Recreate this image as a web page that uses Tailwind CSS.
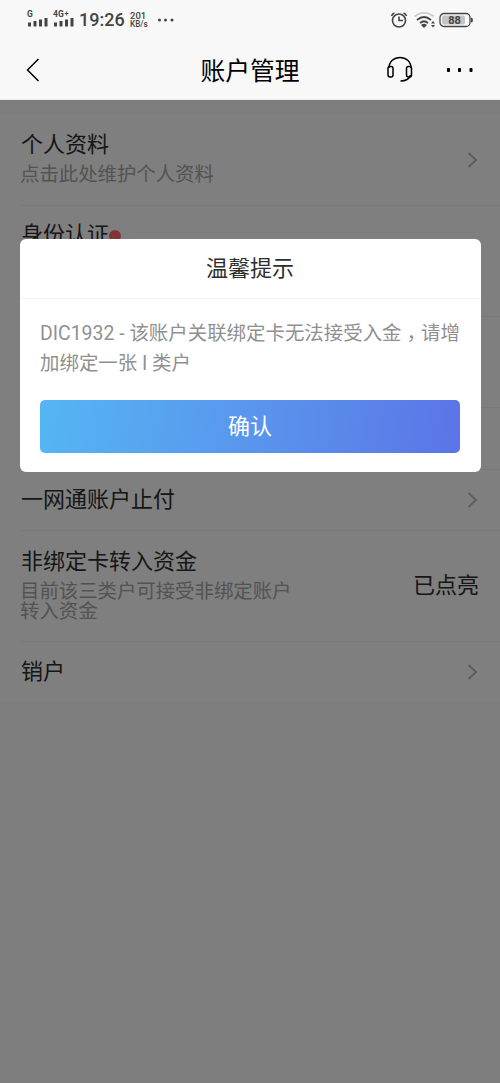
<!DOCTYPE html>
<html lang="zh-CN">
<head>
<meta charset="utf-8">
<title>账户管理</title>
<script src="https://cdn.jsdelivr.net/npm/@tailwindcss/browser@4"></script>
</head>
<body class="relative h-[1083px] w-[500px] overflow-hidden bg-[#fafafa] font-[Roboto,'Noto_Sans_CJK_SC',sans-serif] text-[#2e2e2e]">
<header class="flex h-[100px] flex-col border-b border-[#ececec] bg-[#f8f8f8]">
  <div class="flex h-10 items-center pl-[27px] pr-[26px] text-[#444]">
    <svg class="h-[22px] w-[48px] shrink-0" viewBox="0 0 48 22" fill="#444">
      <text x="0" y="7.500" font-size="8.500" font-weight="700" font-family="Roboto">G</text>
      <text x="26" y="7.500" font-size="8.500" font-weight="700" font-family="Roboto">4G</text>
      <text x="37.500" y="7" font-size="7.500" font-weight="700" font-family="Roboto">+</text>
      <path d="M1 13.500h3v4h-3zM6.500 12h3v5.500h-3zM12 10.500h3v7h-3zM17.500 9h3v8.500h-3zM27 13.500h3v4h-3zM32.500 12h3v5.500h-3zM38 10.500h3v7h-3zM43.500 9h3v8.500h-3z"/>
    </svg>
    <span class="ml-[4px] w-[47px] whitespace-nowrap text-[18px] font-medium leading-none">19:26</span>
    <div class="ml-[4px] w-[20px] font-medium leading-[9px]"><div class="text-[9.500px]">201</div><div class="text-[8.200px]">KB/s</div></div>
    <svg class="ml-[7px] h-4 w-[18px]" viewBox="0 0 18 16" fill="#444"><circle cx="2.500" cy="8" r="1.500"/><circle cx="8.500" cy="8" r="1.500"/><circle cx="15" cy="8" r="1.500"/></svg>
    <svg class="ml-auto h-[18px] w-[18px]" viewBox="0 0 18 18" fill="none" stroke="#444" stroke-width="1.600"><circle cx="9" cy="9.500" r="6.500"/><path d="M9 5.500V9.500h4M1.500 5C2 3.500 3 2.500 4.500 2M16.500 5c-.500-1.500-1.500-2.500-3-3"/></svg>
    <svg class="ml-[6px] h-[18px] w-[22px]" viewBox="0 0 22 18" fill="none" stroke-width="1.700"><path stroke="#ccc" d="M.5 5.500Q10 -2 20 5.500"/><path stroke="#444" d="M3 9Q10 3 17 9M6 12Q10 8.500 14 12"/><path fill="#444" d="M7 14q3-2.500 6 0l-3 3zM17 12.500l2-2.500 2 2.500zM17 14l2 2.500 2-2.500z"/></svg>
    <svg class="ml-[3px] h-[16px] w-[35px]" viewBox="0 0 35 16"><rect x="1" y="1.500" width="30" height="13" rx="4" fill="#f8f8f8" stroke="#444" stroke-width="1.300"/><rect x="3" y="3.500" width="23" height="9" rx="2" fill="#c4c4c4"/><path d="M32 5.500q2 0 2 2.500t-2 2.500z" fill="#444"/><text x="15.500" y="12" text-anchor="middle" font-size="11" font-weight="700" font-family="Roboto" fill="#444">88</text></svg>
  </div>
  <div class="grid h-[60px] grid-cols-[150px_200px_150px] items-center pt-[2px] text-black">
    <svg class="ml-[26px] h-[24px] w-[14px]" viewBox="0 0 14 24" fill="none" stroke="currentColor" stroke-width="1.500"><path d="M12.500 1L1.500 12l11 11"/></svg>
    <h1 class="pt-[4px] text-center text-[24.800px] font-normal leading-[36px]">账户管理</h1>
    <div class="flex items-center pl-[36px]">
      <svg class="h-[28px] w-[28px]" viewBox="0 0 28 28" fill="none" stroke="currentColor" stroke-width="1.500"><path d="M3 12C3 5.500 8 1.500 14 1.500S25 5.500 25 12M24.500 19c-1 4-4 6-10 6"/><rect x="2" y="10.500" width="5" height="10.500" rx="2"/><rect x="20.500" y="10.500" width="5" height="10.500" rx="2"/></svg>
      <svg class="ml-[32px] h-[6px] w-[28px]" viewBox="0 0 28 6" fill="currentColor"><rect x="1" y="1" width="3" height="4" rx=".8"/><rect x="12" y="1" width="3" height="4" rx=".8"/><rect x="23.500" y="1" width="3" height="4" rx=".8"/></svg>
    </div>
  </div>
</header>

<main class="pt-[13px]">
  <section class="bg-white pl-[21px] text-[22px] leading-[30px]">
    <div class="flex h-[93px] items-center justify-between border-b border-[#f3f3f3] pr-[22px] pt-[2px]">
      <div><div>个人资料</div><div class="-ml-px text-[19.400px] text-[#a6a6a6]">点击此处维护个人资料</div></div>
      <svg class="h-4 w-[11px]" viewBox="0 0 11 16" fill="none" stroke="#b8b8b8" stroke-width="1.800"><path d="M1.500 1L9 8l-7.500 7"/></svg>
    </div>
    <div class="flex h-[111px] items-start border-b border-[#f3f3f3] pt-[14px]"><span>身份认证</span><i class="mt-[10px] h-3 w-3 rounded-full bg-[#ff6b6b]"></i></div>
    <div class="h-[91px] border-b border-[#f3f3f3]"></div>
    <div class="h-[62px] border-b border-[#f3f3f3]"></div>
    <div class="flex h-[61px] items-center justify-between border-b border-[#f3f3f3] pr-[22px]">
      <span>一网通账户止付</span>
      <svg class="h-4 w-[11px]" viewBox="0 0 11 16" fill="none" stroke="#b8b8b8" stroke-width="1.800"><path d="M1.500 1L9 8l-7.500 7"/></svg>
    </div>
    <div class="flex h-[111px] items-center justify-between border-b border-[#f3f3f3] pr-[21px]">
      <div class="w-[280px] pb-[6px]"><div class="h-[37px] leading-[34px]">非绑定卡转入资金</div><div class="-ml-px text-[19.400px] leading-[20px] text-[#a6a6a6]">目前该三类户可接受非绑定账户转入资金</div></div>
      <span>已点亮</span>
    </div>
    <div class="flex h-[60px] items-center justify-between pr-[22px]">
      <span>销户</span>
      <svg class="h-4 w-[11px]" viewBox="0 0 11 16" fill="none" stroke="#b8b8b8" stroke-width="1.800"><path d="M1.500 1L9 8l-7.500 7"/></svg>
    </div>
  </section>
</main>

<div class="absolute inset-x-0 bottom-0 top-[100px] bg-black/50 pl-[19.500px] pt-[139px]">
  <div class="h-[233px] w-[461px] rounded-md bg-white">
    <h2 class="flex h-[60px] items-center justify-center border-b border-[#f3f3f3] pb-px text-[22px] font-normal">温馨提示</h2>
    <div class="px-[20.500px] pt-[18px]">
      <p class="h-[83px] whitespace-nowrap text-[19.450px] leading-[30px] text-[#909090]">DIC1932 - 该账户关联绑定卡无法接受入金<span lang="zh-TW" class="relative top-[6px] font-['Noto_Sans_CJK_TC']">，</span>请增<br>加绑定一张 I 类户</p>
      <button class="flex h-[53px] w-[420px] items-center justify-center rounded-[5px] bg-linear-100 from-[#54b6f3] to-[#5b74e6] pb-px text-[22px] text-white">确认</button>
    </div>
  </div>
</div>
</body>
</html>
